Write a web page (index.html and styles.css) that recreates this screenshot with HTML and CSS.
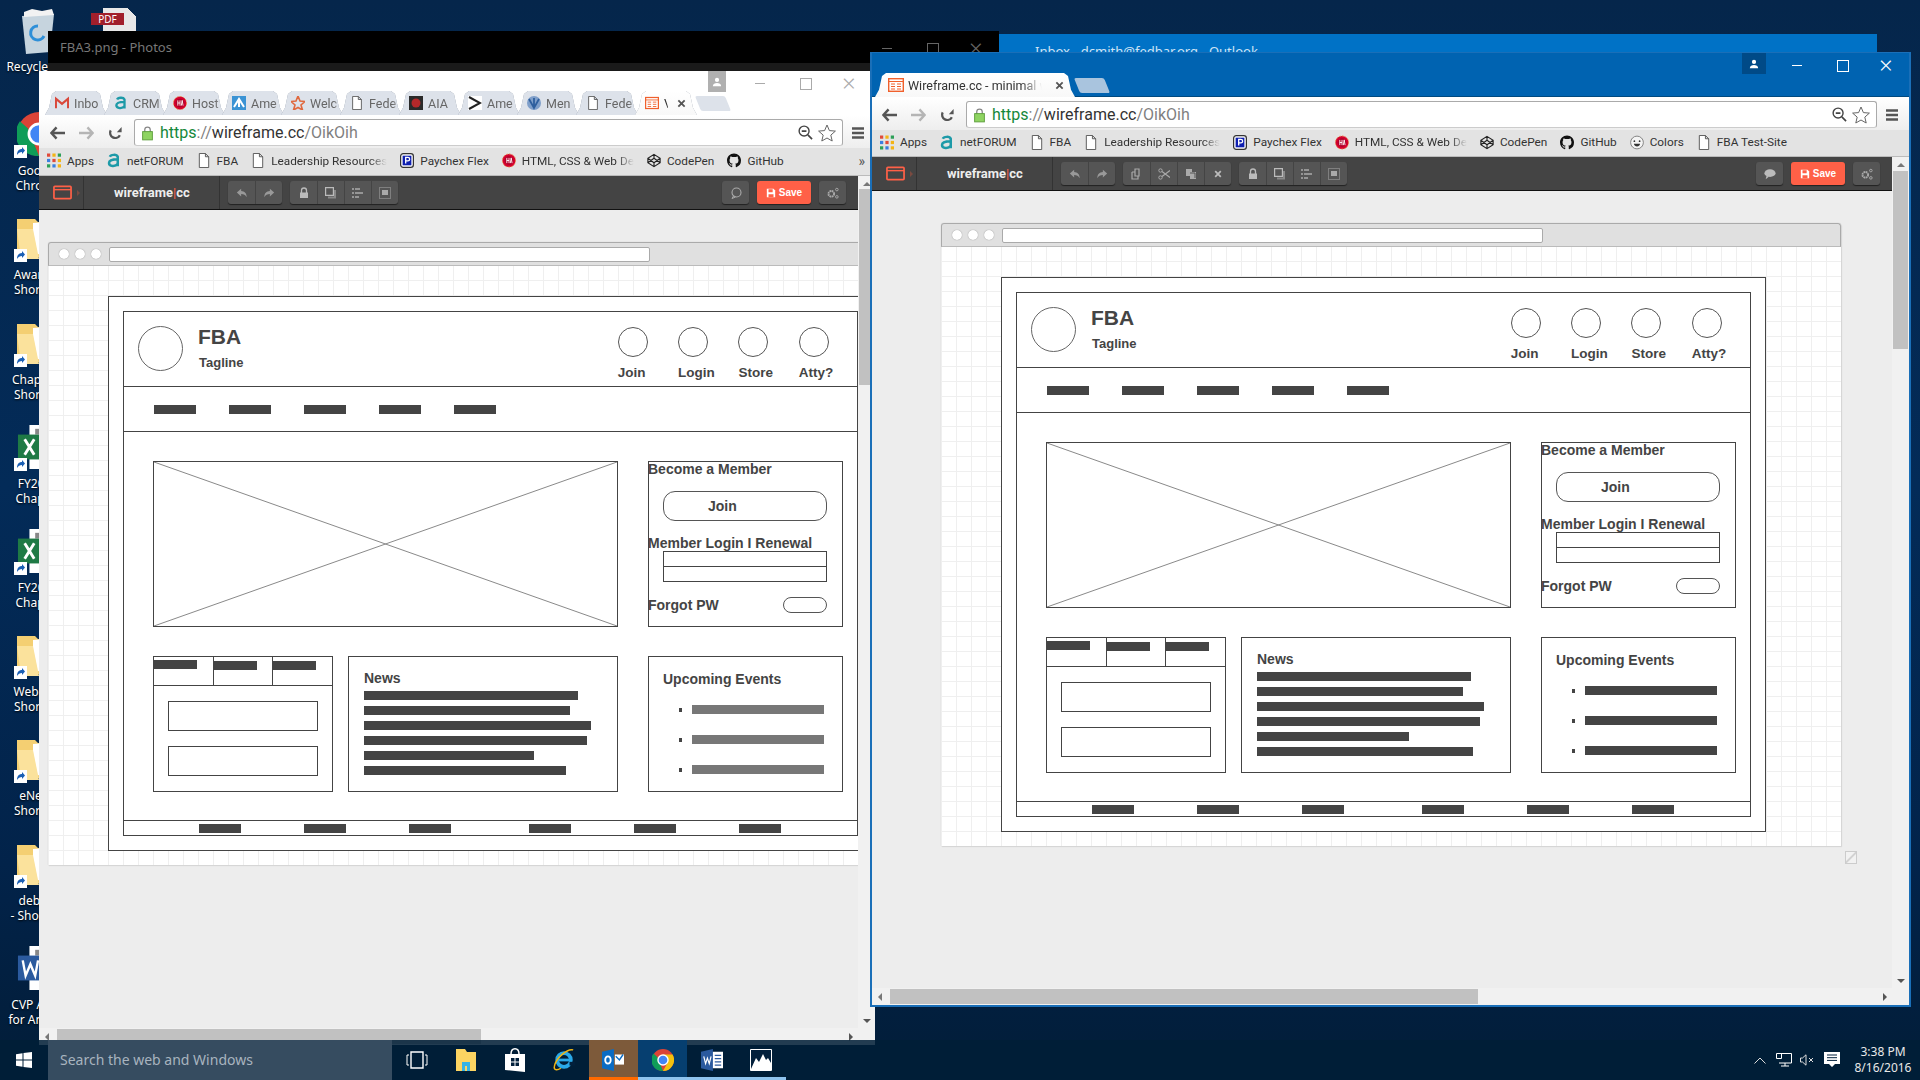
FILE: index.html
```html
<!DOCTYPE html>
<html lang="en">
<head>
  <meta charset="UTF-8" />
  <title>Wireframe.cc - minimal wireframing tool</title>
  <link rel="stylesheet" href="styles.css">
</head>
<body>

  <svg class="defs" aria-hidden="true">
    <symbol id="i-doc" viewBox="0 0 12 16"><path d="M1 .5h6.5L11 4v11.5H1zM7.5 .5V4H11" fill="#fff" stroke="#555"/></symbol>
    <symbol id="i-a" viewBox="0 0 16 18"><path d="M3 4.5C4 2 11 1 12.5 4.5V16M12.5 7.5C8 7.5 2 8 2 12c0 4.5 8 4.5 10.5 1" fill="none" stroke="#1d9aa8" stroke-width="3"/></symbol>
    <symbol id="i-gear" viewBox="0 0 16 16"><circle cx="8" cy="8" r="7.5" fill="#d3002f" stroke="#e84" stroke-dasharray="2 1.5"/><circle cx="8" cy="8" r="5" fill="#b00028"/><path d="M5.5 5v6M8 5v6M5.5 8H8M9.5 11L10.500 5l1 6" stroke="#fff" fill="none"/></symbol>
    <symbol id="i-apps" viewBox="0 0 13 13"><path fill="#e04a3a" d="M0 0h3v3H0z"/><path fill="#f3b416" d="M5 0h3v3H5z"/><path fill="#2c9f57" d="M10 0h3v3h-3z"/><path fill="#3a7fe0" d="M0 5h3v3H0z"/><path fill="#e04a3a" d="M5 5h3v3H5z"/><path fill="#f3b416" d="M10 5h3v3h-3z"/><path fill="#2c9f57" d="M0 10h3v3H0z"/><path fill="#3a7fe0" d="M5 10h3v3H5z"/><path fill="#f3b416" d="M10 10h3v3h-3z"/></symbol>
    <symbol id="i-pay" viewBox="0 0 16 17"><rect x=".7" y=".7" width="14.600" height="15.600" rx="3" fill="#fff" stroke="#333" stroke-width="1.400"/><rect x="3" y="3" width="10" height="11" fill="#0e1fb0"/><path d="M6.500 12V5h2.500a2 2 0 010 4H6.500" fill="none" stroke="#fff" stroke-width="1.500"/></symbol>
    <symbol id="i-pen" viewBox="0 0 16 16"><path d="M8 1l7 4.500v5L8 15l-7-4.500v-5zM8 1v4.500M8 15v-4.500M1 5.500l7 5 7-5M1 10.500l7-5 7 5" fill="none" stroke="#222" stroke-width="1.300"/></symbol>
    <symbol id="i-git" viewBox="0 0 16 16"><path fill="#111" d="M8 0C3.580 0 0 3.580 0 8c0 3.540 2.290 6.530 5.470 7.590.4.070.55-.17.55-.38 0-.19-.01-.82-.01-1.490-2.010.37-2.530-.49-2.690-.94-.09-.23-.48-.94-.82-1.130-.28-.15-.68-.52-.01-.53.63-.01 1.080.58 1.230.82.72 1.210 1.870.87 2.330.66.070-.52.28-.87.51-1.070-1.780-.2-3.640-.89-3.640-3.950 0-.87.31-1.590.82-2.150-.08-.2-.36-1.020.08-2.120 0 0 .67-.21 2.200.82.64-.18 1.320-.27 2-.27.68 0 1.360.09 2 .27 1.530-1.040 2.200-.82 2.200-.82.44 1.100.16 1.920.08 2.120.51.56.82 1.270.82 2.150 0 3.070-1.870 3.750-3.650 3.950.29.25.54.73.54 1.480 0 1.070-.01 1.930-.01 2.200 0 .21.15.46.55.38A8.010 8.010 0 0016 8c0-4.420-3.580-8-8-8z"/></symbol>
    <symbol id="i-face" viewBox="0 0 16 16"><circle cx="8" cy="8" r="7.300" fill="#f4f4f4" stroke="#777"/><circle cx="5" cy="6.500" r="1" fill="#333"/><circle cx="11" cy="6.500" r="1" fill="#333"/><path d="M4.500 9.500h7c-.5 4-6.500 4-7 0z" fill="#333"/></symbol>
    <symbol id="i-fav" viewBox="0 0 16 14"><rect x=".7" y=".7" width="14.600" height="12.600" fill="#fff" stroke="#f0602c" stroke-width="1.400"/><path d="M1 3.500h14M3 6h4M3 8.500h4M3 11h4M9 6h4M9 8.500h4M9 11h4" stroke="#f0602c"/></symbol>
    <symbol id="i-back" viewBox="0 0 16 14"><path d="M7 1L1.500 7 7 13M2 7h14" fill="none" stroke="#555" stroke-width="2.600"/></symbol>
    <symbol id="i-reload" viewBox="0 0 16 16"><path d="M13 10.500A5.800 5.800 0 112.500 5" fill="none" stroke="#555" stroke-width="2.600"/><path d="M9.500 7H15V1z" fill="#555"/></symbol>
    <symbol id="i-lock" viewBox="0 0 12 16"><path d="M3 7V4.500a3 3 0 016 0V7" fill="none" stroke="#888" stroke-width="1.400"/><rect x=".7" y="6.500" width="10.600" height="9" fill="#8fd462" stroke="#5b9c3a"/></symbol>
    <symbol id="i-zoom" viewBox="0 0 16 16"><circle cx="6.500" cy="6.500" r="5.300" fill="none" stroke="#444" stroke-width="1.500"/><path d="M4 6.500h5M10.500 10.500L15 15" stroke="#444" stroke-width="1.800"/></symbol>
    <symbol id="i-star" viewBox="0 0 18 18"><path d="M9 1l2.400 5.600 6 .5-4.600 4 1.400 5.900L9 14l-5.200 3 1.400-5.900-4.600-4 6-.5z" fill="#fff" stroke="#666"/></symbol>
    <symbol id="i-menu" viewBox="0 0 12 12"><path d="M0 1.500h12M0 6h12M0 10.500h12" stroke="#555" stroke-width="2.500"/></symbol>
    <symbol id="i-user" viewBox="0 0 12 12"><circle cx="6" cy="3.500" r="2.500" fill="#fff"/><path d="M1 11c0-5 10-5 10 0z" fill="#fff"/></symbol>
    <symbol id="i-logo" viewBox="0 0 20 15"><rect x="1" y="1" width="18" height="13" rx="1" fill="none" stroke="#ff6047" stroke-width="1.800"/><path d="M1 4.500h18" stroke="#ff6047" stroke-width="1.500"/></symbol>
    <symbol id="i-undo" viewBox="0 0 14 12"><path d="M6 1L1 5.500 6 10V7.300c3 0 5 1 6.500 3.700C12.500 6.500 10 3.800 6 3.700z" fill="#999"/></symbol>
    <symbol id="i-redo" viewBox="0 0 14 12"><path d="M8 1l5 4.500L8 10V7.300c-3 0-5 1-6.500 3.700C1.500 6.500 4 3.800 8 3.700z" fill="#999"/></symbol>
    <symbol id="i-copy" viewBox="0 0 12 12"><path d="M4 1h4v7H4zM1 4h3M1 4v7h6V8" fill="none" stroke="#aaa" stroke-width="1.200"/></symbol>
    <symbol id="i-cut" viewBox="0 0 12 12"><circle cx="2.500" cy="2.500" r="1.700" fill="none" stroke="#aaa"/><circle cx="2.500" cy="9.500" r="1.700" fill="none" stroke="#aaa"/><path d="M4 3.500l8 6M4 8.500l8-6" stroke="#aaa" stroke-width="1.200"/></symbol>
    <symbol id="i-paste" viewBox="0 0 12 12"><path d="M1 1h6v3h4v7H5V8H1z" fill="#aaa"/><path d="M5 5h5v5" fill="none" stroke="#555"/></symbol>
    <symbol id="i-x" viewBox="0 0 10 10"><path d="M1.500 1.500l7 7M8.500 1.500l-7 7" stroke="#bbb" stroke-width="2.200"/></symbol>
    <symbol id="i-xdark" viewBox="0 0 10 10"><path d="M1.500 1.500l7 7M8.500 1.500l-7 7" stroke="#555" stroke-width="2"/></symbol>
    <symbol id="i-padlock" viewBox="0 0 10 12"><path d="M2.500 6V3.500a2.500 2.500 0 015 0V6" fill="none" stroke="#bbb" stroke-width="1.300"/><path d="M1 5.500h8V11H1z" fill="#bbb"/></symbol>
    <symbol id="i-dup" viewBox="0 0 12 12"><path d="M.6.600h7.800v7.800H.6z" fill="none" stroke="#bbb" stroke-width="1.200"/><path d="M10 3v7.500H3" fill="none" stroke="#888" stroke-width="2"/></symbol>
    <symbol id="i-align" viewBox="0 0 12 12"><path d="M1 1v2M1 5v2M1 9v2M3 2h5M3 6h8M3 10h4" stroke="#aaa" stroke-width="1.500"/></symbol>
    <symbol id="i-group" viewBox="0 0 12 12"><rect x=".5" y=".5" width="11" height="11" fill="none" stroke="#aaa" stroke-dasharray="1 1"/><path d="M3 3h6v5H3z" fill="#aaa"/></symbol>
    <symbol id="i-bubble" viewBox="0 0 14 12"><ellipse cx="7" cy="5" rx="6.500" ry="4.500" fill="#bbb"/><path d="M3 8l-1 4 4-3z" fill="#bbb"/></symbol>
    <symbol id="i-bubble-o" viewBox="0 0 12 12"><circle cx="6.500" cy="5.500" r="4.500" fill="none" stroke="#aaa" stroke-width="1.100"/><path d="M3.500 9L2 11.500 5.500 10" fill="none" stroke="#aaa"/></symbol>
    <symbol id="i-save" viewBox="0 0 12 12"><path d="M1 1h8l2 2v8H1z" fill="#fff"/><path d="M3 1.500h5V5H3zM3 7.500h6V11H3z" fill="#ff6047"/></symbol>
    <symbol id="i-cog" viewBox="0 0 14 14"><circle cx="5" cy="8" r="3.300" fill="none" stroke="#aaa" stroke-width="2.200" stroke-dasharray="2 .6"/><circle cx="11.500" cy="3" r="1.500" fill="none" stroke="#aaa" stroke-width="1.100"/><circle cx="11.500" cy="11.500" r="1.500" fill="none" stroke="#aaa" stroke-width="1.100"/></symbol>
    <symbol id="i-folder" viewBox="0 0 44 42"><path d="M0 2h18l3 3h23v35H0z" fill="#f4cf72"/><path d="M16 6l26-2v30l-26 4z" fill="#fff"/><path d="M24 14h16v22H24z" fill="#3d6fb0"/><path d="M0 12h16l6 30H4z" fill="#fbe29c"/></symbol>
    <symbol id="i-excel" viewBox="0 0 44 46"><path d="M12 0h32v46H12z" fill="#fff"/><path d="M18 4h24v6H18z" fill="#888"/><path d="M26 14h14M26 20h14M26 26h14M26 32h14" stroke="#3a9a5e" stroke-width="3"/><path d="M0 10h24v26H0z" fill="#1f7a45"/><path d="M7 15l10 16M17 15L7 31" stroke="#fff" stroke-width="3"/></symbol>
    <symbol id="i-word" viewBox="0 0 44 46"><path d="M12 0h32v46H12z" fill="#fff"/><path d="M18 4h24v6H18z" fill="#888"/><path d="M28 14h13M28 20h13M28 26h13M28 32h13" stroke="#2b5a9e" stroke-width="3"/><path d="M0 10h26v26H0z" fill="#2b5a9e"/><path d="M5 15l3 16 5-12 5 12 3-16" fill="none" stroke="#fff" stroke-width="2.500"/></symbol>
    <symbol id="i-short" viewBox="0 0 13 13"><path d="M0 0h13v13H0z" fill="#fff"/><path d="M3 10c0-4 2-6 5-6V2l3 3.500L8 9V7C6 7 4 8 3 10z" fill="#1a5fb4"/></symbol>
    <symbol id="i-chrome" viewBox="0 0 24 24"><circle cx="12" cy="12" r="12" fill="#db4437"/><path d="M12 24L6 9 1.600 5A12 12 0 0012 24z" fill="#0f9d58"/><path d="M12 24a12 12 0 0010.400-18L12 6l5 9z" fill="#f4c20d"/><circle cx="12" cy="12" r="5.500" fill="#4285f4" stroke="#fff" stroke-width="1.500"/></symbol>
    <symbol id="i-win" viewBox="0 0 16 16"><path d="M0 2.300l6.500-1v6.200H0zM7.500 1.100L16 0v7.500H7.500zM0 8.500h6.500v6.200l-6.500-1zM7.500 8.500H16V16l-8.500-1.100z" fill="#fff"/></symbol>
    <symbol id="i-task" viewBox="0 0 22 22"><path d="M5 3h12v16H5z" fill="none" stroke="#fff" stroke-width="1.400"/><path d="M3 6H1v10h2M19 6h2v10h-2" fill="none" stroke="#fff"/></symbol>
    <symbol id="i-explorer" viewBox="0 0 22 24"><path d="M1 1h9l2 3h9v19H1z" fill="#fcd462"/><path d="M7 14h8v9H7z" fill="#35b3e6"/><path d="M10 18h2v5h-2z" fill="#fcd462"/></symbol>
    <symbol id="i-store" viewBox="0 0 22 24"><path d="M1 6h20v18L1 22z" fill="#fff"/><path d="M7 6c0-7 8-7 8 0" fill="none" stroke="#fff" stroke-width="1.500"/><path d="M7 10h3.500v3.500H7zM11.500 10H15v3.500h-3.500zM7 14.500h3.500V18H7zM11.500 14.500H15V18h-3.500z" fill="#02203c"/></symbol>
    <symbol id="i-ie" viewBox="0 0 24 24"><circle cx="12" cy="12" r="7.500" fill="none" stroke="#2aa9e8" stroke-width="4"/><path d="M5 12h14" stroke="#2aa9e8" stroke-width="3"/><path d="M18 14h6v4h-6z" fill="#02203c"/><path d="M22 1C16-1 3 10 1.500 19c-1 5 4 4 7 2" fill="none" stroke="#f0b616" stroke-width="1.600"/></symbol>
    <symbol id="i-outlook" viewBox="0 0 24 24"><path d="M0 3l13-3v24L0 21z" fill="#0a6cc4"/><ellipse cx="6.500" cy="12" rx="3" ry="4" fill="none" stroke="#fff" stroke-width="2"/><path d="M14 6h10v11H14z" fill="#fff"/><path d="M15 8l4 4 4-6" fill="none" stroke="#0a6cc4" stroke-width="1.500"/></symbol>
    <symbol id="i-wordtask" viewBox="0 0 24 24"><path d="M10 3h14v18H10z" fill="#fff"/><path d="M15 7h7M15 10.500h7M15 14h7M15 17.500h7" stroke="#2b5a9e" stroke-width="1.300"/><path d="M0 3l13-3v24L0 21z" fill="#2b5a9e"/><path d="M3 8l2 8 2-6 2 6 2-8" fill="none" stroke="#fff" stroke-width="1.300"/></symbol>
    <symbol id="i-photos" viewBox="0 0 22 22"><path d="M.5.5h21v21H.5z" fill="#02203c" stroke="#fff"/><path d="M1 20l5-11 3 4 4-8 3 6 2-2 3 5v7H1z" fill="#fff"/></symbol>
    <symbol id="i-net" viewBox="0 0 16 14"><path d="M3 .5h12.500v9.500H3M9 10v3M5 13h8M.5 .5h5v5h-5z" fill="none" stroke="#fff"/></symbol>
    <symbol id="i-speaker" viewBox="0 0 14 12"><path d="M.5 4h2L6 .8v10.400L2.500 8h-2z" fill="none" stroke="#ddd"/><path d="M9 4l4 4M13 4L9 8" stroke="#ddd"/></symbol>
    <symbol id="i-note" viewBox="0 0 16 16"><path d="M0 0h16v12h-5l-3 3-3-3H0z" fill="#fff"/><path d="M3 3h10M3 5.700h10M3 8.400h10" stroke="#02203c"/></symbol>
  </svg>

  <main class="desktop">
    <ul class="desk-icons">
      <li class="desk-icon">
        <svg class="bin" viewBox="0 0 40 46"><path d="M4 8l32-2-4 38-24 2z" fill="#c6d4de"/><path d="M6 4l8-3 10 2 10-2 2 6-30 2z" fill="#f2f2f2"/><path d="M20 18a7 7 0 106 10" fill="none" stroke="#2e8fd8" stroke-width="3"/></svg>
        <span>Recycle Bin</span>
      </li>
      <li class="desk-icon"><span class="icon-wrap"><svg class="big"><use href="#i-chrome"/></svg><svg class="short"><use href="#i-short"/></svg></span><span>Google<br>Chrome</span></li>
      <li class="desk-icon"><span class="icon-wrap"><svg class="big"><use href="#i-folder"/></svg><svg class="short"><use href="#i-short"/></svg></span><span>Awards -<br>Shortcut</span></li>
      <li class="desk-icon"><span class="icon-wrap"><svg class="big"><use href="#i-folder"/></svg><svg class="short"><use href="#i-short"/></svg></span><span>Chapter -<br>Shortcut</span></li>
      <li class="desk-icon"><span class="icon-wrap"><svg class="big"><use href="#i-excel"/></svg><svg class="short"><use href="#i-short"/></svg></span><span>FY2016<br>Chapter</span></li>
      <li class="desk-icon"><span class="icon-wrap"><svg class="big"><use href="#i-excel"/></svg><svg class="short"><use href="#i-short"/></svg></span><span>FY2017<br>Chapter</span></li>
      <li class="desk-icon"><span class="icon-wrap"><svg class="big"><use href="#i-folder"/></svg><svg class="short"><use href="#i-short"/></svg></span><span>Web Site<br>Shortcut</span></li>
      <li class="desk-icon"><span class="icon-wrap"><svg class="big"><use href="#i-folder"/></svg><svg class="short"><use href="#i-short"/></svg></span><span>eNews<br>Shortcut</span></li>
      <li class="desk-icon"><span class="icon-wrap"><svg class="big"><use href="#i-folder"/></svg><svg class="short"><use href="#i-short"/></svg></span><span>debbie<br>- Shortcut</span></li>
      <li class="desk-icon"><span class="icon-wrap"><svg class="big"><use href="#i-word"/></svg></span><span>CVP Apps<br>for Annual</span></li>
    </ul>

    <div class="pdf-icon"><span class="pdf-tag">PDF</span></div>

    <!-- windows behind the two browsers -->
    <section class="outlook-win"><span>Inbox - dcmith@fedbar.org - Outlook</span></section>
    <section class="photos-win">
      <span class="photos-title">FBA3.png - Photos</span>
      <div class="photos-ctrl"><i class="ctl-min"></i><i class="ctl-max"></i><i class="ctl-x"></i></div>
    </section>

    <!-- left browser -->
    <section class="window win-left">
      <header class="win-title">
        <div class="tabs">
          <div class="tab"><svg class="fav" viewBox="0 0 16 14"><path d="M1 13V2l7 6 7-6v11" fill="none" stroke="#d9483b" stroke-width="2.500"/></svg><span class="tab-text">Inbo</span></div>
          <div class="tab"><svg class="fav"><use href="#i-a"/></svg><span class="tab-text">CRM</span></div>
          <div class="tab"><svg class="fav"><use href="#i-gear"/></svg><span class="tab-text">Host</span></div>
          <div class="tab"><svg class="fav" viewBox="0 0 14 14"><path d="M0 0h14v14H0z" fill="#3b93d4"/><path d="M2 11l5-8 5 8M7 3v8" fill="none" stroke="#fff" stroke-width="2"/></svg><span class="tab-text">Ame</span></div>
          <div class="tab"><svg class="fav" viewBox="0 0 14 14"><path d="M7 0l2 5 5 .5-4 3.500 1.500 5L7 11.500 2.500 14 4 9 0 5.500 5 5z" fill="none" stroke="#e0693f" stroke-width="1.600"/></svg><span class="tab-text">Welc</span></div>
          <div class="tab"><svg class="fav"><use href="#i-doc"/></svg><span class="tab-text">Fede</span></div>
          <div class="tab"><svg class="fav" viewBox="0 0 14 14"><path d="M0 0h14v14H0z" fill="#2a2a2a"/><circle cx="7" cy="7" r="4.500" fill="#b5282a"/></svg><span class="tab-text">AIA</span></div>
          <div class="tab"><svg class="fav" viewBox="0 0 14 14"><path d="M0 0h14v14H0z" fill="#fff"/><path d="M1 1l11 6-11 6" fill="none" stroke="#222" stroke-width="2"/></svg><span class="tab-text">Ame</span></div>
          <div class="tab"><svg class="fav" viewBox="0 0 14 14"><circle cx="7" cy="7" r="7" fill="#7f9fca"/><path d="M2 3l5 9 5-9M7 2v10" fill="none" stroke="#2e5f9e" stroke-width="1.800"/></svg><span class="tab-text">Men</span></div>
          <div class="tab"><svg class="fav"><use href="#i-doc"/></svg><span class="tab-text">Fede</span></div>
          <div class="tab tab-active"><svg class="fav"><use href="#i-fav"/></svg><span class="tab-text">V</span><svg class="tab-x"><use href="#i-xdark"/></svg></div>
          <div class="tab-new"></div>
        </div>
        <div class="win-ctrl">
          <div class="avatar"><svg><use href="#i-user"/></svg></div>
          <i class="ctl-min"></i><i class="ctl-max"></i><i class="ctl-x"></i>
        </div>
      </header>
      <div class="toolbar">
        <svg class="nav-ic"><use href="#i-back"/></svg>
        <svg class="nav-ic nav-off"><use href="#i-back"/></svg>
        <svg class="nav-ic"><use href="#i-reload"/></svg>
        <div class="omnibox">
          <svg class="omni-lock"><use href="#i-lock"/></svg>
          <span class="url"><b>https</b><i>://</i>wireframe.cc<i>/OikOih</i></span>
          <svg class="omni-zoom"><use href="#i-zoom"/></svg>
          <svg class="omni-star"><use href="#i-star"/></svg>
        </div>
        <svg class="menu-ic"><use href="#i-menu"/></svg>
      </div>
      <nav class="bookmarks">
        <a class="bm"><svg><use href="#i-apps"/></svg>Apps</a>
        <a class="bm"><svg><use href="#i-a"/></svg>netFORUM</a>
        <a class="bm"><svg><use href="#i-doc"/></svg>FBA</a>
        <a class="bm"><svg><use href="#i-doc"/></svg><span class="bm-fade">Leadership Resources</span></a>
        <a class="bm"><svg><use href="#i-pay"/></svg>Paychex Flex</a>
        <a class="bm"><svg><use href="#i-gear"/></svg><span class="bm-fade">HTML, CSS &amp; Web De</span></a>
        <a class="bm"><svg><use href="#i-pen"/></svg>CodePen</a>
        <a class="bm"><svg><use href="#i-git"/></svg>GitHub</a>
        <span class="bm-more">»</span>
      </nav>
      <div class="win-body">
        <div class="win-main">
          <div class="appbar">
            <div class="app-logo"><svg><use href="#i-logo"/></svg><i></i></div>
            <div class="app-brand">wireframe<em>|</em>cc</div>
            <div class="tools">
              <div class="tool-group"><span class="tool"><svg><use href="#i-undo"/></svg></span><span class="tool"><svg><use href="#i-redo"/></svg></span></div>
              <div class="tool-group"><span class="tool"><svg><use href="#i-padlock"/></svg></span><span class="tool"><svg><use href="#i-dup"/></svg></span><span class="tool"><svg><use href="#i-align"/></svg></span><span class="tool"><svg><use href="#i-group"/></svg></span></div>
            </div>
            <div class="tools tools-right">
              <div class="tool-group"><span class="tool"><svg><use href="#i-bubble-o"/></svg></span></div>
              <div class="save-btn"><svg><use href="#i-save"/></svg>Save</div>
              <div class="tool-group"><span class="tool"><svg><use href="#i-cog"/></svg></span></div>
            </div>
          </div>
          <div class="page">
            <div class="frame">
              <div class="frame-bar"><i></i><i></i><i></i><div class="frame-url"></div></div>
              <div class="frame-grid">
                <div class="wf-outer">
                  <div class="wf-site">
                    <div class="wf-header">
                      <div class="wf-logo"></div>
                      <div class="wf-brand"><strong>FBA</strong><span>Tagline</span></div>
                      <ul class="wf-actions">
                        <li><i></i><span>Join</span></li>
                        <li><i></i><span>Login</span></li>
                        <li><i></i><span>Store</span></li>
                        <li><i></i><span>Atty?</span></li>
                      </ul>
                    </div>
                    <div class="wf-nav"><i></i><i></i><i></i><i></i><i></i></div>
                    <div class="wf-main">
                      <div class="wf-row">
                        <svg class="wf-image" viewBox="0 0 464 166" preserveAspectRatio="none"><path d="M0 0L464 166M464 0L0 166" stroke="#888" fill="none"/></svg>
                        <div class="wf-side">
                          <h3>Become a Member</h3>
                          <div class="wf-join">Join</div>
                          <h3 class="wf-login-label">Member Login I Renewal</h3>
                          <div class="wf-field"></div>
                          <div class="wf-field wf-field-2"></div>
                          <div class="wf-forgot"><h3>Forgot PW</h3><div class="wf-pill"></div></div>
                        </div>
                      </div>
                      <div class="wf-row wf-row-2">
                        <div class="wf-tabs">
                          <div class="wf-tabrow"><div class="first"><i></i></div><div><i></i></div><div><i></i></div></div>
                          <div class="wf-input"></div>
                          <div class="wf-input"></div>
                        </div>
                        <div class="wf-news">
                          <h3>News</h3>
                          <i class="w214"></i><i class="w206"></i><i class="w227"></i><i class="w223"></i><i class="w170"></i><i class="w202"></i>
                        </div>
                        <div class="wf-events">
                          <h3>Upcoming Events</h3>
                          <ul><li><i></i></li><li><i></i></li><li><i></i></li></ul>
                        </div>
                      </div>
                    </div>
                    <div class="wf-footer"><i></i><i></i><i></i><i class="wide"></i><i></i><i></i></div>
                  </div>
                </div>
              </div>
            </div>
            <div class="resize-handle"></div>
          </div>
        </div>
        <div class="vscroll"><b class="arrow-up"></b><div class="thumb"></div><b class="arrow-down"></b></div>
      </div>
      <div class="hscroll"><b class="arrow-left"></b><div class="thumb"></div><b class="arrow-right"></b></div>
    </section>

    <!-- right browser -->
    <section class="window win-right">
      <header class="win-title">
        <div class="tabs">
          <div class="tab tab-active"><svg class="fav"><use href="#i-fav"/></svg><span class="tab-text">Wireframe.cc - minimal wi</span><svg class="tab-x"><use href="#i-xdark"/></svg></div>
          <div class="tab-new"></div>
        </div>
        <div class="win-ctrl">
          <div class="avatar"><svg><use href="#i-user"/></svg></div>
          <i class="ctl-min"></i><i class="ctl-max"></i><i class="ctl-x"></i>
        </div>
      </header>
      <div class="toolbar">
        <svg class="nav-ic"><use href="#i-back"/></svg>
        <svg class="nav-ic nav-off"><use href="#i-back"/></svg>
        <svg class="nav-ic"><use href="#i-reload"/></svg>
        <div class="omnibox">
          <svg class="omni-lock"><use href="#i-lock"/></svg>
          <span class="url"><b>https</b><i>://</i>wireframe.cc<i>/OikOih</i></span>
          <svg class="omni-zoom"><use href="#i-zoom"/></svg>
          <svg class="omni-star"><use href="#i-star"/></svg>
        </div>
        <svg class="menu-ic"><use href="#i-menu"/></svg>
      </div>
      <nav class="bookmarks">
        <a class="bm"><svg><use href="#i-apps"/></svg>Apps</a>
        <a class="bm"><svg><use href="#i-a"/></svg>netFORUM</a>
        <a class="bm"><svg><use href="#i-doc"/></svg>FBA</a>
        <a class="bm"><svg><use href="#i-doc"/></svg><span class="bm-fade">Leadership Resources</span></a>
        <a class="bm"><svg><use href="#i-pay"/></svg>Paychex Flex</a>
        <a class="bm"><svg><use href="#i-gear"/></svg><span class="bm-fade">HTML, CSS &amp; Web De</span></a>
        <a class="bm"><svg><use href="#i-pen"/></svg>CodePen</a>
        <a class="bm"><svg><use href="#i-git"/></svg>GitHub</a>
        <a class="bm"><svg><use href="#i-face"/></svg>Colors</a>
        <a class="bm"><svg><use href="#i-doc"/></svg>FBA Test-Site</a>
      </nav>
      <div class="win-body">
        <div class="win-main">
          <div class="appbar">
            <div class="app-logo"><svg><use href="#i-logo"/></svg><i></i></div>
            <div class="app-brand">wireframe<em>|</em>cc</div>
            <div class="tools">
              <div class="tool-group"><span class="tool"><svg><use href="#i-undo"/></svg></span><span class="tool"><svg><use href="#i-redo"/></svg></span></div>
              <div class="tool-group"><span class="tool"><svg><use href="#i-copy"/></svg></span><span class="tool"><svg><use href="#i-cut"/></svg></span><span class="tool"><svg><use href="#i-paste"/></svg></span><span class="tool"><svg class="small"><use href="#i-x"/></svg></span></div>
              <div class="tool-group"><span class="tool"><svg><use href="#i-padlock"/></svg></span><span class="tool"><svg><use href="#i-dup"/></svg></span><span class="tool"><svg><use href="#i-align"/></svg></span><span class="tool"><svg><use href="#i-group"/></svg></span></div>
            </div>
            <div class="tools tools-right">
              <div class="tool-group"><span class="tool"><svg><use href="#i-bubble"/></svg></span></div>
              <div class="save-btn"><svg><use href="#i-save"/></svg>Save</div>
              <div class="tool-group"><span class="tool"><svg><use href="#i-cog"/></svg></span></div>
            </div>
          </div>
          <div class="page">
            <div class="frame">
              <div class="frame-bar"><i></i><i></i><i></i><div class="frame-url"></div></div>
              <div class="frame-grid">
                <div class="wf-outer">
                  <div class="wf-site">
                    <div class="wf-header">
                      <div class="wf-logo"></div>
                      <div class="wf-brand"><strong>FBA</strong><span>Tagline</span></div>
                      <ul class="wf-actions">
                        <li><i></i><span>Join</span></li>
                        <li><i></i><span>Login</span></li>
                        <li><i></i><span>Store</span></li>
                        <li><i></i><span>Atty?</span></li>
                      </ul>
                    </div>
                    <div class="wf-nav"><i></i><i></i><i></i><i></i><i></i></div>
                    <div class="wf-main">
                      <div class="wf-row">
                        <svg class="wf-image" viewBox="0 0 464 166" preserveAspectRatio="none"><path d="M0 0L464 166M464 0L0 166" stroke="#888" fill="none"/></svg>
                        <div class="wf-side">
                          <h3>Become a Member</h3>
                          <div class="wf-join">Join</div>
                          <h3 class="wf-login-label">Member Login I Renewal</h3>
                          <div class="wf-field"></div>
                          <div class="wf-field wf-field-2"></div>
                          <div class="wf-forgot"><h3>Forgot PW</h3><div class="wf-pill"></div></div>
                        </div>
                      </div>
                      <div class="wf-row wf-row-2">
                        <div class="wf-tabs">
                          <div class="wf-tabrow"><div class="first"><i></i></div><div><i></i></div><div><i></i></div></div>
                          <div class="wf-input"></div>
                          <div class="wf-input"></div>
                        </div>
                        <div class="wf-news">
                          <h3>News</h3>
                          <i class="w214"></i><i class="w206"></i><i class="w227"></i><i class="w223"></i><i class="w152"></i><i class="w216"></i>
                        </div>
                        <div class="wf-events">
                          <h3>Upcoming Events</h3>
                          <ul><li><i></i></li><li><i></i></li><li><i></i></li></ul>
                        </div>
                      </div>
                    </div>
                    <div class="wf-footer"><i></i><i></i><i></i><i class="wide"></i><i></i><i></i></div>
                  </div>
                </div>
              </div>
            </div>
            <div class="resize-handle"></div>
          </div>
        </div>
        <div class="vscroll"><b class="arrow-up"></b><div class="thumb"></div><b class="arrow-down"></b></div>
      </div>
      <div class="hscroll"><b class="arrow-left"></b><div class="thumb"></div><b class="arrow-right"></b></div>
    </section>

    <footer class="taskbar">
      <div class="start"><svg><use href="#i-win"/></svg></div>
      <div class="search">Search the web and Windows</div>
      <div class="task"><svg><use href="#i-task"/></svg></div>
      <div class="task"><svg><use href="#i-explorer"/></svg></div>
      <div class="task"><svg><use href="#i-store"/></svg></div>
      <div class="task"><svg><use href="#i-ie"/></svg></div>
      <div class="task task-outlook"><svg><use href="#i-outlook"/></svg></div>
      <div class="task task-chrome"><svg><use href="#i-chrome"/></svg></div>
      <div class="task task-open"><svg><use href="#i-wordtask"/></svg></div>
      <div class="task task-open"><svg><use href="#i-photos"/></svg></div>
      <div class="tray">
        <svg class="tray-up" viewBox="0 0 12 7"><path d="M.5 6.500L6 1l5.500 5.500" fill="none" stroke="#ddd"/></svg>
        <svg class="tray-net"><use href="#i-net"/></svg>
        <svg class="tray-spk"><use href="#i-speaker"/></svg>
        <svg class="tray-note"><use href="#i-note"/></svg>
        <div class="clock"><span>3:38 PM</span><span>8/16/2016</span></div>
      </div>
    </footer>
  </main>

</body>
</html>
```

FILE: styles.css
```css
* {
  box-sizing: border-box;
}
html, body {
  margin: 0;
  height: 100%;
}
body {
  font-family: "Noto Sans", "Open Sans", sans-serif;
  overflow: hidden;
}
ul {
  list-style: none;
  margin: 0;
  padding: 0;
}
i, em, b {
  font-style: normal;
}
.defs {
  position: absolute;
  width: 0;
  height: 0;
}

/* desktop */
.desktop {
  position: relative;
  width: 1920px;
  height: 1080px;
  overflow: hidden;
  background: linear-gradient(180deg, #05264b 0%, #032b58 45%, #02234a 80%, #021d38 100%);
}
.desk-icons {
  padding-top: 5px;
  width: 76px;
}
.desk-icon {
  height: 104.2px;
  display: flex;
  flex-direction: column;
  align-items: center;
  color: #fff;
  font-size: 12px;
  line-height: 15px;
  text-align: center;
  text-shadow: 0 1px 2px #000;
  white-space: nowrap;
}
.bin {
  width: 40px;
  height: 46px;
  margin: 3px 0 5px;
  flex: none;
}
.icon-wrap {
  position: relative;
  display: block;
  width: 46px;
  height: 46px;
  margin: 3px 0 5px;
  flex: none;
}
.big {
  width: 44px;
  height: 44px;
  margin-left: 1px;
}
.short {
  position: absolute;
  left: -1px;
  bottom: 0;
  width: 13px;
  height: 13px;
}
.pdf-icon {
  position: absolute;
  left: 103px;
  top: 8px;
  width: 33px;
  height: 30px;
  background: linear-gradient(225deg, transparent 6px, #e8e8e8 6px);
}
.pdf-tag {
  position: absolute;
  left: -12px;
  top: 5px;
  width: 33px;
  height: 12px;
  background: #a11f2b;
  color: #fff;
  font-size: 10px;
  line-height: 12px;
  text-align: center;
}
.outlook-win {
  position: absolute;
  left: 999px;
  top: 34px;
  width: 878px;
  height: 60px;
  padding: 8px 0 0 36px;
  background: #0072c6;
  color: #cfe3f4;
  font-size: 13px;
}
.photos-win {
  position: absolute;
  left: 48px;
  top: 31px;
  width: 951px;
  height: 200px;
  background: linear-gradient(180deg, #000 32px, #1a1a1a 32px);
  color: #777;
  font-size: 13px;
}
.photos-title {
  position: absolute;
  left: 12px;
  top: 7px;
}
.photos-ctrl {
  position: absolute;
  right: 0;
  top: 5px;
  display: flex;
}

/* browser windows */
.window {
  position: absolute;
  display: flex;
  flex-direction: column;
  overflow: hidden;
  background: #f2f2f2;
}
.win-left {
  left: 39px;
  top: 71px;
  width: 836px;
  height: 974px;
}
.win-right {
  left: 870px;
  top: 52px;
  width: 1041px;
  height: 955px;
  border: 2px solid #1a6fb8;
  border-top-width: 1px;
}
.win-title {
  height: 44px;
  flex: none;
  display: flex;
  justify-content: space-between;
  position: relative;
}
.win-left .win-title {
  background: #fff;
  padding-left: 6px;
}
.win-right .win-title {
  background: #0063b1;
  padding-left: 3px;
  border-bottom: 1px solid #004a80;
}
.tabs {
  display: flex;
  flex: 1;
  min-width: 0;
  align-self: flex-end;
  height: 24px;
}
.win-right .tabs {
  margin-bottom: -1px;
}
.tab {
  position: relative;
  isolation: isolate;
  width: 62px;
  flex: none;
  margin-right: -3px;
  padding-left: 10px;
  display: flex;
  align-items: center;
  gap: 5px;
  color: #666;
  font-family: "Roboto", "Noto Sans", sans-serif;
  font-size: 12.5px;
  filter: drop-shadow(0 0 .6px #8a93a0);
}
.tab::before {
  content: "";
  position: absolute;
  inset: 0;
  z-index: -1;
  background: #dde2ea;
  clip-path: polygon(0 100%, 4px 70%, 7px 12%, 11px 0, calc(100% - 11px) 0, calc(100% - 7px) 12%, calc(100% - 4px) 70%, 100% 100%);
}
.tab-active {
  color: #333;
}
.tab-active::before {
  background: linear-gradient(180deg, #fff, #f8f8f8);
}
.win-right .tab-active {
  width: 200px;
  padding-left: 13px;
  gap: 4px;
  filter: none;
}
.fav {
  width: 14px;
  height: 14px;
  flex: none;
}
.win-right .fav {
  width: 16px;
  height: 14px;
}
.tab-text {
  flex: 1;
  min-width: 0;
  white-space: nowrap;
  -webkit-mask-image: linear-gradient(90deg, #000 70%, transparent 100%);
  mask-image: linear-gradient(90deg, #000 70%, transparent 100%);
}
.tab-active .tab-text {
  -webkit-mask-image: linear-gradient(90deg, #000 85%, transparent 100%);
  mask-image: linear-gradient(90deg, #000 85%, transparent 100%);
}
.tab-x {
  width: 9px;
  height: 9px;
  margin: 0 11px 0 9px;
  flex: none;
}
.win-left .tab-x {
  margin: 0 11px 0 4px;
}
.tab-new {
  width: 30px;
  height: 15px;
  margin: 5px 0 0 4px;
  background: #dde2ea;
  transform: skewX(22deg);
  border-radius: 2px;
  flex: none;
}
.win-right .tab-new {
  background: #a9c4de;
  margin-left: 5px;
}
.win-ctrl {
  display: flex;
  align-items: flex-start;
  flex: none;
}
.win-left .win-ctrl {
  margin-right: 3px;
}
.avatar {
  width: 18px;
  height: 21px;
  margin-right: 11px;
  background: #b0b0b0;
  display: flex;
  align-items: center;
  justify-content: center;
}
.avatar svg {
  width: 10px;
  height: 10px;
}
.win-right .avatar {
  width: 24px;
  background: #004a87;
  margin-right: 8px;
}
.win-ctrl i, .photos-ctrl i {
  position: relative;
  display: block;
  width: 45px;
  height: 20px;
  color: #aaa;
}
.win-right .win-ctrl i {
  color: #fff;
}
.photos-ctrl i {
  color: #666;
}
.ctl-min::after {
  content: "";
  position: absolute;
  left: 18px;
  top: 12px;
  width: 10px;
  height: 1px;
  background: currentColor;
}
.ctl-max::after {
  content: "";
  position: absolute;
  left: 18px;
  top: 7px;
  width: 10px;
  height: 10px;
  border: 1px solid currentColor;
}
.ctl-x::after {
  content: "\00d7";
  position: absolute;
  left: 15px;
  top: 0;
  color: currentColor;
  font-size: 24px;
  line-height: 24px;
  font-weight: 300;
}

.toolbar {
  height: 33px;
  flex: none;
  display: flex;
  align-items: center;
  padding: 2px 11px 0 11px;
  background: linear-gradient(180deg, #fff, #eee);
}
.win-right .toolbar {
  padding-left: 10px;
}
.nav-ic {
  width: 15px;
  height: 14px;
  margin-right: 14px;
  flex: none;
}
.nav-off {
  transform: scaleX(-1);
  opacity: .4;
}
.omnibox {
  flex: 1;
  height: 27px;
  margin: 0 9px 0 -3px;
  padding: 0 6px 0 7px;
  display: flex;
  align-items: center;
  background: #fff;
  border: 1px solid #aaa;
  border-bottom-color: #ccc;
  border-radius: 3px;
}
.omni-lock {
  width: 11px;
  height: 16px;
  margin-right: 7px;
  flex: none;
}
.url {
  flex: 1;
  font-family: "Roboto", "Noto Sans", sans-serif;
  font-size: 16px;
  color: #333;
  white-space: nowrap;
}
.url b {
  color: #15883a;
  font-weight: 400;
}
.url i {
  color: #7f7f7f;
}
.omni-zoom {
  width: 15px;
  height: 15px;
  margin-right: 5px;
}
.omni-star {
  width: 18px;
  height: 18px;
}
.menu-ic {
  width: 12px;
  height: 12px;
  flex: none;
}

.bookmarks {
  height: 27px;
  flex: none;
  display: flex;
  align-items: center;
  gap: 13px;
  padding: 0 0 2px 8px;
  background: #e3e3e3;
  border-bottom: 1px solid #bbb;
  color: #333;
  font-family: "Roboto", "Noto Sans", sans-serif;
  font-size: 11.8px;
  white-space: nowrap;
}
.win-left .bookmarks {
  height: 28px;
}
.bm {
  display: flex;
  align-items: center;
  gap: 6px;
}
.bm svg {
  width: 14px;
  height: 15px;
  flex: none;
}
.bm-fade {
  -webkit-mask-image: linear-gradient(90deg, #000 85%, transparent 100%);
  mask-image: linear-gradient(90deg, #000 85%, transparent 100%);
}
.bm-more {
  margin-left: auto;
  margin-right: 10px;
  color: #555;
  font-size: 14px;
}

.win-body {
  flex: 1;
  min-height: 0;
  display: flex;
}
.win-main {
  flex: 1;
  min-width: 0;
  display: flex;
  flex-direction: column;
}

/* wireframe.cc app bar */
.appbar {
  height: 34px;
  flex: none;
  display: flex;
  align-items: center;
  background: #444;
  border-bottom: 1px solid #111;
}
.app-logo {
  width: 45px;
  height: 100%;
  padding-left: 14px;
  display: flex;
  align-items: center;
  gap: 5px;
  border-right: 1px solid #333;
}
.app-logo svg {
  width: 19px;
  height: 15px;
}
.app-logo i {
  width: 0;
  height: 0;
  border: 3px solid transparent;
  border-left-color: #7a4a40;
}
.app-brand {
  width: 136px;
  height: 100%;
  padding-left: 30px;
  display: flex;
  align-items: center;
  border-right: 1px solid #333;
  color: #eee;
  font-family: "Roboto", "Liberation Sans", sans-serif;
  font-size: 13px;
  font-weight: 700;
}
.app-brand em {
  color: #ff6047;
  font-weight: 400;
}
.tools {
  display: flex;
  gap: 8px;
  margin-left: 8px;
}
.tools-right {
  margin-left: auto;
  margin-right: 12px;
}
.tool-group {
  display: flex;
  height: 23px;
  background: #555;
  border-radius: 3px;
  box-shadow: 0 1px 1px #222;
}
.tool {
  width: 27px;
  display: flex;
  align-items: center;
  justify-content: center;
  border-left: 1px solid #444;
}
.tool:first-child {
  border-left: 0;
}
.tool svg {
  width: 12px;
  height: 12px;
}
.tool svg.small {
  width: 8px;
  height: 8px;
}
.save-btn {
  width: 54px;
  height: 23px;
  display: flex;
  align-items: center;
  justify-content: center;
  gap: 3px;
  background: #ff6047;
  border-radius: 3px;
  box-shadow: 0 1px 1px #222;
  color: #fff;
  font-family: "Liberation Sans", sans-serif;
  font-size: 10px;
  font-weight: 700;
}
.save-btn svg {
  width: 10px;
  height: 10px;
}

/* page around the wireframe */
.page {
  flex: 1;
  min-height: 0;
  overflow: hidden;
  background: #ededed;
  padding: 32px 0 0 9px;
}
.win-right .page {
  padding-left: 69px;
}
.frame {
  width: 900px;
  height: 623px;
  border-radius: 3px 3px 0 0;
  box-shadow: 1px 1px 1px #d4d4d4, 0 0 1px #bbb;
  background: #fff;
}
.frame-bar {
  height: 24px;
  display: flex;
  align-items: center;
  gap: 6px;
  padding-left: 10px;
  background: #e0e0e0;
  border: 1px solid #aaa;
  border-bottom-color: #bbb;
  border-radius: 3px 3px 0 0;
}
.frame-bar i {
  width: 10px;
  height: 10px;
  background: #fff;
  border-radius: 50%;
  box-shadow: 0 0 1px #777;
}
.frame-url {
  width: 541px;
  height: 15px;
  margin-left: 2px;
  background: #fff;
  border: 1px solid #aaa;
  border-radius: 2px;
}
.frame-grid {
  height: 599px;
  padding: 30px 0 0 60px;
  background-color: #fff;
  background-image:
    linear-gradient(#efefef 1px, transparent 1px),
    linear-gradient(90deg, #efefef 1px, transparent 1px);
  background-size: 15px 15px;
  background-position: 0 14px;
}

/* wireframe itself */
.wf-outer {
  width: 765px;
  height: 555px;
  padding: 14px;
  background: #fff;
  border: 1px solid #444;
}
.wf-site {
  width: 735px;
  height: 525px;
  display: flex;
  flex-direction: column;
  border: 1px solid #444;
  color: #444;
  font-family: "Liberation Sans", Arial, sans-serif;
  font-weight: 700;
}
.wf-site h3 {
  margin: 0;
  font-size: 14px;
  line-height: 16px;
}
.wf-header {
  height: 75px;
  flex: none;
  display: flex;
  border-bottom: 1px solid #444;
}
.wf-logo {
  width: 45px;
  height: 45px;
  margin: 14px 0 0 14px;
  border: 1px solid #666;
  border-radius: 50%;
}
.wf-brand {
  display: flex;
  flex-direction: column;
  margin-left: 15px;
}
.wf-brand strong {
  margin-top: 13px;
  font-size: 21px;
  line-height: 24px;
}
.wf-brand span {
  margin: 6px 0 0 1px;
  font-size: 13px;
  line-height: 16px;
}
.wf-actions {
  display: flex;
  margin-left: auto;
  margin-right: -2px;
  padding-top: 15px;
}
.wf-actions li {
  width: 60.3px;
  font-size: 13.5px;
}
.wf-actions i {
  display: block;
  width: 30px;
  height: 30px;
  margin-bottom: 8px;
  border: 1px solid #555;
  border-radius: 50%;
}
.wf-nav {
  height: 45px;
  flex: none;
  display: flex;
  align-items: center;
  gap: 33px;
  padding: 1px 0 0 30px;
  border-bottom: 1px solid #444;
}
.wf-nav i, .wf-footer i, .wf-tabrow i, .wf-news i, .wf-events li i {
  display: block;
  height: 9px;
  background: #444;
}
.wf-nav i {
  width: 42px;
}
.wf-main {
  flex: 1;
  padding: 29px 0 0 29px;
}
.wf-row {
  display: flex;
  height: 166px;
}
.wf-image {
  width: 465px;
  height: 166px;
  flex: none;
  border: 1px solid #444;
}
.wf-side {
  width: 195px;
  margin-left: 30px;
  border: 1px solid #444;
}
.wf-side h3 {
  margin-left: -1px;
}
.wf-side h3:first-child {
  margin-top: -1px;
}
.wf-join {
  width: 164px;
  height: 30px;
  margin: 14px 0 14px 14px;
  padding-left: 44px;
  border: 1px solid #555;
  border-radius: 12px;
  font-size: 14px;
  line-height: 28px;
}
.wf-field {
  width: 164px;
  height: 16px;
  margin-left: 14px;
  border: 1px solid #444;
}
.wf-field-2 {
  margin-top: -1px;
}
.wf-forgot {
  display: flex;
  justify-content: space-between;
  align-items: center;
  height: 16px;
  margin-top: 15px;
  padding-right: 15px;
}
.wf-forgot h3 {
  margin-top: -2px;
}
.wf-pill {
  width: 44px;
  height: 16px;
  border: 1px solid #555;
  border-radius: 8px;
}
.wf-row-2 {
  height: 136px;
  margin-top: 29px;
}
.wf-tabs {
  width: 180px;
  flex: none;
  border: 1px solid #444;
}
.wf-tabrow {
  display: flex;
  height: 29px;
  margin-bottom: 15px;
  border-bottom: 1px solid #444;
}
.wf-tabrow div {
  width: 60px;
  padding-top: 4px;
  border-left: 1px solid #444;
}
.wf-tabrow .first {
  border-left: 0;
  padding-top: 3px;
  width: 59px;
}
.wf-tabrow i {
  width: 43px;
}
.wf-input {
  width: 150px;
  height: 30px;
  margin: 0 0 15px 14px;
  border: 1px solid #444;
}
.wf-news {
  width: 270px;
  margin-left: 15px;
  padding: 13px 0 0 15px;
  border: 1px solid #444;
}
.wf-news h3 {
  margin-bottom: 5px;
}
.wf-news i {
  margin-bottom: 6px;
}
.w214 { width: 214px; }
.w206 { width: 206px; }
.w227 { width: 227px; }
.w223 { width: 223px; }
.w152 { width: 152px; }
.w216 { width: 216px; }
.w170 { width: 170px; }
.w202 { width: 202px; }
.wf-events {
  width: 195px;
  margin-left: 30px;
  padding: 14px 0 0 14px;
  border: 1px solid #444;
}
.wf-events ul {
  margin-top: 18px;
}
.wf-events li {
  display: flex;
  align-items: center;
  gap: 10px;
  height: 9px;
  margin: 0 0 21px 16px;
}
.wf-events li::before {
  content: "";
  width: 3px;
  height: 4px;
  background: #444;
}
.wf-events li i {
  width: 132px;
}
.win-left .wf-events li i {
  background: #777;
}
.wf-footer {
  height: 15px;
  flex: none;
  display: flex;
  gap: 63px;
  padding: 3px 0 0 75px;
  border-top: 1px solid #444;
}
.wf-footer i {
  width: 42px;
}
.wf-footer .wide {
  margin-left: 15px;
}
.resize-handle {
  width: 12px;
  height: 13px;
  margin: 5px 0 0 904px;
  background: linear-gradient(135deg, #f2f2f2 40%, #c8c8c8 50%, #f2f2f2 60%);
  border: 1px solid #ccc;
}

/* scrollbars */
.vscroll {
  width: 17px;
  flex: none;
  display: flex;
  flex-direction: column;
  align-items: center;
  background: #f1f1f1;
}
.vscroll .thumb {
  width: 15px;
  background: #c1c1c1;
}
.win-left .vscroll .thumb {
  height: 196px;
  margin-top: 3px;
}
.win-right .vscroll .thumb {
  height: 178px;
  margin-top: 4px;
}
.hscroll {
  height: 17px;
  flex: none;
  display: flex;
  align-items: center;
  background: #f1f1f1;
}
.hscroll .thumb {
  height: 15px;
  margin-left: 8px;
  background: #c1c1c1;
}
.win-left .hscroll .thumb {
  width: 424px;
}
.win-right .hscroll .thumb {
  width: 588px;
}
.arrow-up, .arrow-down, .arrow-left, .arrow-right {
  width: 0;
  height: 0;
  border: 4px solid transparent;
  flex: none;
}
.arrow-up {
  margin-top: 6px;
  border-bottom-color: #777;
  border-top-width: 0;
}
.arrow-down {
  margin-top: auto;
  margin-bottom: 5px;
  border-top-color: #555;
  border-bottom-width: 0;
}
.arrow-left {
  margin-left: 6px;
  border-right-color: #777;
  border-left-width: 0;
}
.arrow-right {
  margin-left: auto;
  margin-right: 22px;
  border-left-color: #555;
  border-right-width: 0;
}

/* taskbar */
.taskbar {
  position: absolute;
  left: 0;
  right: 0;
  bottom: 0;
  height: 40px;
  display: flex;
  background: rgba(0, 30, 55, .86);
}
.start {
  width: 48px;
  display: flex;
  align-items: center;
  justify-content: center;
}
.start svg {
  width: 16px;
  height: 16px;
}
.search {
  width: 344px;
  padding-left: 12px;
  background: #364c60;
  color: #a8b4bf;
  font-size: 14px;
  line-height: 40px;
}
.task {
  width: 49.2px;
  display: flex;
  align-items: center;
  justify-content: center;
  border-bottom: 3px solid transparent;
}
.task svg {
  width: 22px;
  height: 24px;
  margin-top: 3px;
}
.task-outlook {
  background: #7d5a3a;
  border-bottom-color: #ff6a00;
}
.task-chrome {
  background: #063f70;
  border-bottom-color: #8fc4ee;
}
.task-open {
  border-bottom-color: #8fc4ee;
}
.tray {
  margin-left: auto;
  display: flex;
  align-items: center;
  padding-right: 7px;
}
.tray-up {
  width: 12px;
  height: 7px;
  margin-right: 10px;
}
.tray-net {
  width: 16px;
  height: 14px;
  margin-right: 8px;
}
.tray-spk {
  width: 14px;
  height: 12px;
  margin-right: 10px;
}
.tray-note {
  width: 16px;
  height: 16px;
  margin-right: 13px;
}
.clock {
  width: 60px;
  display: flex;
  flex-direction: column;
  align-items: center;
  color: #e8e8e8;
  font-size: 12px;
  line-height: 16px;
}
```
